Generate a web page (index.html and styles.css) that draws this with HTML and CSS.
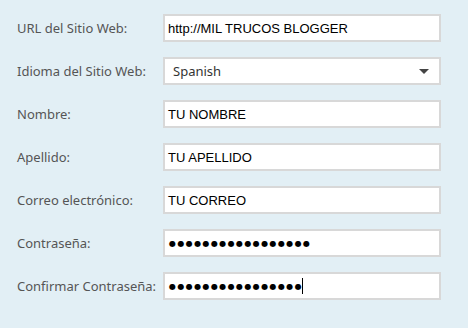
FILE: index.html
```html
<!DOCTYPE html>
<html lang="es">
<head>
    <meta charset="UTF-8">
    <meta name="viewport" content="width=device-width, initial-scale=1.0">
    <title>Registro</title>
    <link rel="stylesheet" href="styles.css">
</head>
<body>
    <form class="site-form">
        <div class="form-row">
            <span class="form-label">URL del Sitio Web:</span>
            <div class="field">http://MIL TRUCOS BLOGGER</div>
        </div>
        <div class="form-row">
            <span class="form-label">Idioma del Sitio Web:</span>
            <div class="field select-field">
                <span class="select-text">Spanish</span>
                <span class="arrow"></span>
            </div>
        </div>
        <div class="form-row">
            <span class="form-label">Nombre:</span>
            <div class="field">TU NOMBRE</div>
        </div>
        <div class="form-row">
            <span class="form-label">Apellido:</span>
            <div class="field">TU APELLIDO</div>
        </div>
        <div class="form-row">
            <span class="form-label">Correo electrónico:</span>
            <div class="field">TU CORREO</div>
        </div>
        <div class="form-row">
            <span class="form-label">Contraseña:</span>
            <div class="field dots">●●●●●●●●●●●●●●●●●</div>
        </div>
        <div class="form-row">
            <span class="form-label">Confirmar Contraseña:</span>
            <div class="field dots">●●●●●●●●●●●●●●●●<span class="caret"></span></div>
        </div>
    </form>
</body>
</html>
```

FILE: styles.css
```css
body {
    margin: 0;
    background-color: #e2eff5;
}
.site-form {
    padding: 14px 0 0 17px;
    display: flex;
    flex-direction: column;
    gap: 15px;
}
.form-row {
    display: flex;
    align-items: center;
}
.form-label {
    width: 146px;
    font-family: "Noto Sans", "Open Sans", sans-serif;
    font-size: 13px;
    color: #555;
}
.field {
    box-sizing: border-box;
    width: 278px;
    height: 28px;
    background: #fff;
    border: 2px solid #d8d8d8;
    padding: 0 3px;
    display: flex;
    align-items: center;
    font-family: "Liberation Sans", Arial, sans-serif;
    font-size: 13px;
    color: #000;
}
.select-field {
    justify-content: space-between;
    padding: 0 10px 0 8px;
}
.select-text {
    font-family: "Noto Sans", "Open Sans", sans-serif;
    color: #333;
}
.arrow {
    width: 0;
    height: 0;
    border-left: 5px solid transparent;
    border-right: 5px solid transparent;
    border-top: 5px solid #444;
}
.dots {
    font-family: "DejaVu Sans", sans-serif;
    font-size: 8px;
    letter-spacing: 1.4px;
    padding-left: 4px;
}
.caret {
    display: inline-block;
    width: 1px;
    height: 16px;
    background: #000;
    margin-left: -1px;
}
```
